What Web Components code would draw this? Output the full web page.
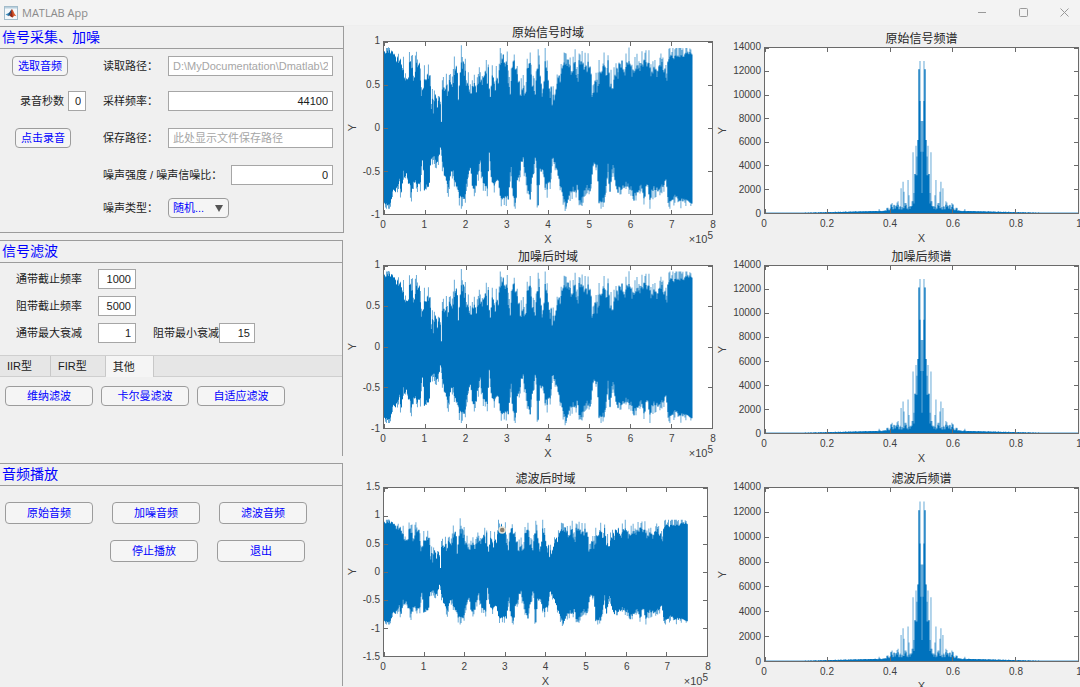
<!DOCTYPE html>
<html lang="zh-CN">
<head>
<meta charset="utf-8">
<title>MATLAB App</title>
<style>
  html, body { margin: 0; height: 100%; }
  body { overflow: hidden; background: #f0f0f0; color: #1c1c1c; font: 11px/14px "Liberation Sans", "Noto Sans CJK SC", sans-serif; }
  .side { display: flex; flex-direction: column; gap: 7px; }
  .capture { display: grid; grid-template-rows: 34px 36px 37px 37px 30px; padding-bottom: 9px; }
  .row { display: grid; grid-template-columns: 103px minmax(0, 1fr); align-items: center; padding-right: 10px; }
  .cell { padding-left: 12px; }
  .cell.indent { padding-left: 15px; }
  .cell.wide { padding-left: 20px; }
  .params { display: grid; grid-template-rows: repeat(3, 27px); align-items: center; padding: 2px 0 9px 16px; }
  .pair { display: flex; align-items: center; gap: 17px; }
  .filters { display: flex; gap: 8px; padding: 9px 5px 50px; --button-width: 88px; }
  .player { display: flex; flex-direction: column; gap: 16px; padding: 16px 5px; min-height: 168px; --button-width: 88px; --button-height: 22px; }
  .player > div { display: flex; gap: 19px; }
  .player > div + div { padding-left: 105px; }
</style>
</head>
<body>
<matlab-window caption="MATLAB App">
  <div class="side" slot="side">
    <ui-panel caption="信号采集、加噪" closed>
      <div class="capture">
        <div class="row">
          <div class="cell"><ui-button>选取音频</ui-button></div>
          <ui-field label="读取路径：" placeholder="D:\MyDocumentation\Dmatlab\2021"></ui-field>
        </div>
        <div class="row">
          <div class="cell wide"><ui-field label="录音秒数" value="0" style="--label-width:48px;--input-width:18px"></ui-field></div>
          <ui-field label="采样频率：" value="44100"></ui-field>
        </div>
        <div class="row">
          <div class="cell indent"><ui-button>点击录音</ui-button></div>
          <ui-field label="保存路径：" placeholder="此处显示文件保存路径"></ui-field>
        </div>
        <div class="row">
          <div class="cell"></div>
          <ui-field label="噪声强度 / 噪声信噪比：" value="0" style="--label-width:128px"></ui-field>
        </div>
        <div class="row">
          <div class="cell"></div>
          <ui-select label="噪声类型：" value="随机..."></ui-select>
        </div>
      </div>
    </ui-panel>
    <ui-panel caption="信号滤波">
      <div class="params" style="--label-width:82px;--input-width:38px">
        <ui-field label="通带截止频率" value="1000"></ui-field>
        <ui-field label="阻带截止频率" value="5000"></ui-field>
        <div class="pair">
          <ui-field label="通带最大衰减" value="1"></ui-field>
          <ui-field label="阻带最小衰减" value="15" style="--label-width:66px;--input-width:36px"></ui-field>
        </div>
      </div>
      <ui-tabs labels="IIR型,FIR型,其他" selected="2">
        <div class="filters">
          <ui-button>维纳滤波</ui-button>
          <ui-button>卡尔曼滤波</ui-button>
          <ui-button>自适应滤波</ui-button>
        </div>
      </ui-tabs>
    </ui-panel>
    <ui-panel caption="音频播放">
      <div class="player">
        <div>
          <ui-button>原始音频</ui-button>
          <ui-button>加噪音频</ui-button>
          <ui-button>滤波音频</ui-button>
        </div>
        <div>
          <ui-button>停止播放</ui-button>
          <ui-button>退出</ui-button>
        </div>
      </div>
    </ui-panel>
  </div>
  <axis-chart kind="wave" caption="原始信号时域" y="1,0.5,0,-0.5,-1" x="0,1,2,3,4,5,6,7,8" exponent="5" style="--plot-height:174px"></axis-chart>
  <axis-chart kind="spectrum" caption="原始信号频谱" y="14000,12000,10000,8000,6000,4000,2000,0" x="0,0.2,0.4,0.6,0.8,1" style="--plot-height:167px;--top:6px;--gutter:50px"></axis-chart>
  <axis-chart kind="wave" caption="加噪后时域" y="1,0.5,0,-0.5,-1" x="0,1,2,3,4,5,6,7,8" exponent="5" style="--plot-height:164px"></axis-chart>
  <axis-chart kind="spectrum" caption="加噪后频谱" y="14000,12000,10000,8000,6000,4000,2000,0" x="0,0.2,0.4,0.6,0.8,1" style="--plot-height:169px;--gutter:50px"></axis-chart>
  <axis-chart kind="wave" caption="滤波后时域" y="1.5,1,0.5,0,-0.5,-1,-1.5" x="0,1,2,3,4,5,6,7,8" exponent="5" marker="36.6,25" style="--plot-height:170px;--end:6px"></axis-chart>
  <axis-chart kind="spectrum" caption="滤波后频谱" y="14000,12000,10000,8000,6000,4000,2000,0" x="0,0.2,0.4,0.6,0.8,1" style="--plot-height:175px;--gutter:50px"></axis-chart>
</matlab-window>

<script>
function mount(el, html) {
  const root = el.attachShadow({ mode: 'open' });
  root.innerHTML = html;
  return root;
}

customElements.define('matlab-window', class extends HTMLElement {
  connectedCallback() {
    mount(this, `
    <style>
      :host { display: flex; flex-direction: column; min-height: 100%; }
      header { display: flex; align-items: center; height: 25px; background: #f3f3f3; color: #8a8a8a; border-bottom: 1px solid #eeeeee; }
      h1 { flex: 1; margin: 0; padding-left: 4px; font: 400 11px/14px "Open Sans", "Noto Sans", sans-serif; }
      .logo { padding-left: 4px; width: 14px; height: 14px; }
      nav { display: flex; gap: 13px; padding-right: 2px; }
      nav button { all: unset; display: grid; place-items: center; width: 28px; height: 24px; }
      main { display: grid; grid-template-columns: 344px minmax(0, 1fr); }
      .charts { display: grid; grid-template-columns: minmax(0, 370fr) minmax(0, 366fr); grid-template-rows: 224px 222px 222px; }
    </style>
    <header>
      <svg class="logo" viewBox="0 0 14 14"><rect x=".5" y=".5" width="13" height="13" fill="#f4f8fb" stroke="#a3bccb"/><path d="M1 1h12v1.500H1z" fill="#b9d0de"/><path d="M1.500 8.600 4.600 7 6 8.200 4.300 10z" fill="#3c8dbd"/><path d="M4.600 7C6 6.600 6.500 3.500 8 3.200L6.800 8.500 4.500 10.200z" fill="#20537f"/><path d="M8 3.200C9.200 3.600 10 8 12.500 10.200 11 9.300 10 9.500 8.800 11.300 8 12 7 10.500 5.500 9.600 7 8.500 7.200 4.500 8 3.200z" fill="#d8572a"/><path d="M8 3.200C8.300 5.500 8.400 9 8.800 11.300 7.800 11.400 7 10.500 5.500 9.600 7 8.500 7.200 4.500 8 3.200z" fill="#8e2a1e"/></svg>
      <h1></h1>
      <nav>
        <button aria-label="最小化"><svg width="9" height="9"><path d="M0 4.500h8" stroke="#999"/></svg></button>
        <button aria-label="最大化"><svg width="9" height="9"><rect x=".5" y=".5" width="8" height="8" rx="1" fill="none" stroke="#999"/></svg></button>
        <button aria-label="关闭"><svg width="9" height="9"><path d="M.5.5l8 8M8.500.5l-8 8" stroke="#999"/></svg></button>
      </nav>
    </header>
    <main>
      <slot name="side"></slot>
      <div class="charts"><slot></slot></div>
    </main>`).querySelector('h1').textContent = this.getAttribute('caption');
  }
});

customElements.define('ui-panel', class extends HTMLElement {
  connectedCallback() {
    mount(this, `
    <style>
      :host { display: block; border-top: 1px solid #9c9c9c; border-right: 1px solid #9c9c9c; margin-right: 1px; }
      :host([closed]) { border-bottom: 1px solid #9c9c9c; margin-right: 0; }
      h2 { margin: 0; padding-left: 2px; height: 21px; border-bottom: 1px solid #9c9c9c; color: #00f; font-size: 14px; line-height: 21px; font-weight: 400; }
    </style>
    <h2></h2><slot></slot>`).querySelector('h2').textContent = this.getAttribute('caption');
  }
});

customElements.define('ui-button', class extends HTMLElement {
  connectedCallback() {
    mount(this, `
    <style>
      :host { display: inline-block; vertical-align: middle; }
      button { display: block; box-sizing: border-box; width: var(--button-width, 56px); height: var(--button-height, 20px); padding: 0; border: 1px solid #9c9c9c; border-radius: 4px; background: #f5f5f5; color: #00f; font: inherit; white-space: nowrap; }
    </style>
    <button type="button"><slot></slot></button>`);
  }
});

customElements.define('ui-field', class extends HTMLElement {
  connectedCallback() {
    const root = mount(this, `
    <style>
      :host { display: flex; align-items: center; }
      label { flex: none; width: var(--label-width, 65px); white-space: nowrap; }
      input { box-sizing: border-box; width: var(--input-width, 100%); min-width: 0; height: 20px; margin: 0; padding: 0 4px; border: 1px solid #a6a6a6; border-radius: 0; background: #fff; color: #1c1c1c; font: inherit; text-align: right; }
      input:placeholder-shown { text-align: left; }
      input::placeholder { color: #a6a6a6; opacity: 1; }
    </style>
    <label for="f"></label><input id="f" type="text">`);
    const input = root.querySelector('input');
    root.querySelector('label').textContent = this.getAttribute('label');
    input.value = this.getAttribute('value') || '';
    if (this.hasAttribute('placeholder')) input.placeholder = this.getAttribute('placeholder');
  }
});

customElements.define('ui-select', class extends HTMLElement {
  connectedCallback() {
    const root = mount(this, `
    <style>
      :host { display: flex; align-items: center; }
      label { flex: none; width: 65px; }
      .box { display: grid; grid-template-columns: 61px; align-items: center; }
      .box > * { grid-area: 1 / 1; }
      select { appearance: none; box-sizing: border-box; height: 20px; margin: 0; padding: 0 4px; border: 1px solid #9c9c9c; border-radius: 4px; background: #f5f5f5; color: #00f; font: inherit; }
      svg { justify-self: end; margin-right: 6px; pointer-events: none; }
    </style>
    <label for="s"></label>
    <div class="box"><select id="s"><option></option></select><svg width="8" height="7"><path d="M0 0h8L4 7z" fill="#555"/></svg></div>`);
    root.querySelector('label').textContent = this.getAttribute('label');
    root.querySelector('option').textContent = this.getAttribute('value');
  }
});

customElements.define('ui-tabs', class extends HTMLElement {
  connectedCallback() {
    const current = +this.getAttribute('selected');
    mount(this, `
    <style>
      :host { display: block; }
      [role=tablist] { display: flex; height: 20px; background: #e6e6e6; border-top: 1px solid #cfcfcf; border-bottom: 1px solid #cfcfcf; }
      button { height: 20px; margin: 0; padding: 0 18px 0 7px; border: 0; border-right: 1px solid #c8c8c8; background: none; color: #1c1c1c; font: inherit; }
      button[aria-selected=true] { height: 21px; background: #f5f5f5; }
    </style>
    <div role="tablist">${this.getAttribute('labels').split(',').map((t, i) =>
      `<button type="button" role="tab" aria-selected="${i === current}">${t}</button>`).join('')}</div>
    <slot></slot>`);
  }
});

/* Envelope of the audio signal: x, y pairs; amplitude 1 is y=50 and amplitude -1 is y=572. */
const UPPER = [115,85,120,78,135,78,150,90,160,95,168,105,175,158,183,148,190,115,198,108,203,175,208,98,212,120,220,115,225,190,230,200,235,150,245,148,250,150,255,205,265,225,270,200,275,235,280,215,286,272,290,170,296,190,300,174,306,184,312,160,318,178,325,150,330,110,334,150,338,225,342,130,348,100,355,115,362,165,370,190,375,210,380,170,390,165,400,158,410,155,420,140,428,130,432,230,438,130,445,160,460,140,464,95,470,88,478,108,485,102,492,210,498,115,505,100,512,140,520,170,525,205,532,190,540,215,545,115,553,104,558,160,567,215,575,100,583,135,590,205,597,92,603,130,610,175,618,195,625,205,632,175,640,150,650,110,660,95,668,110,675,130,680,120,688,105,695,170,700,110,710,110,720,125,730,110,735,120,740,215,748,150,757,185,765,135,772,108,780,112,783,170,788,95,793,170,800,185,807,150,815,115,822,112,830,112,838,140,845,108,855,100,865,140,873,120,885,108,895,100,905,108,910,95,918,130,925,115,935,130,945,108,953,112,960,112,962,175,968,95,985,98,1000,92,1020,88,1041,82];
const LOWER = [115,545,135,545,138,505,150,500,160,480,165,510,172,455,180,458,187,480,195,505,205,480,215,490,222,490,228,390,235,500,248,495,255,415,262,402,270,425,280,405,285,362,290,430,300,480,307,490,315,440,322,455,335,505,345,535,355,530,362,480,370,448,375,435,380,495,390,495,398,435,403,425,410,480,425,500,430,385,438,480,445,495,455,462,465,535,475,525,488,535,495,420,500,515,510,540,515,470,525,430,532,405,540,465,547,505,553,525,558,470,565,430,570,395,577,545,582,450,590,430,597,490,605,495,613,475,620,405,630,430,637,470,645,495,655,535,660,550,670,525,680,498,690,515,695,480,700,535,710,535,715,508,725,495,735,505,742,425,755,435,760,535,775,540,783,480,788,405,791,525,800,435,806,445,812,510,825,500,840,485,855,495,865,530,875,505,885,495,895,530,905,480,912,535,925,495,940,510,955,490,962,460,968,535,980,535,990,515,1000,530,1020,530,1041,540];
const PEAKS = {347:60,463:68,505:88,553:82,577:72,598:68,661:85,703:88,775:82,787:90,850:67,910:75,946:85,1033:70,127:66,325:94,208:91,889:78,979:80,289:166,310:150,427:118,760:105,526:160,532:150};
const DIPS = {347:556,574:552,658:563,505:549,475:545,118:552,133:550,193:523,773:551,1036:548,895:543,970:550,424:518,445:507};

function at(list, x) {
  let i = 2;
  while (i < list.length - 2 && list[i] < x) i += 2;
  const t = Math.min(1, Math.max(0, (x - list[i - 2]) / (list[i] - list[i - 2])));
  return list[i - 1] + t * (list[i + 1] - list[i - 1]);
}

function wavePaths() {
  let seed = 7, solid = '', faint = '';
  const rnd = () => (seed = (seed * 16807) % 2147483647) / 2147483647;
  const near = (map, x) => { for (const k in map) if (Math.abs(k - x) < 1.6) return map[k]; };
  for (let x = 115; x < 1040; x += 3) {
    const calm = x < 150 || x > 965;
    const gap = !calm && rnd() > .82 ? 30 * rnd() : 0;
    const top = at(UPPER, x) + rnd() * (calm ? 14 : 28) - 5 + gap;
    const low = at(LOWER, x) - rnd() * (calm ? 12 : 20) + 4;
    const hi = near(PEAKS, x) || Math.max(68, top - (rnd() > .45 ? rnd() * 44 : 3));
    const lo = near(DIPS, x) || Math.min(556, low + (rnd() > .5 ? rnd() * 30 : 2));
    solid += `M${x} ${top.toFixed(1)}V${low.toFixed(1)}h3V${top.toFixed(1)}z`;
    faint += `M${x} ${hi.toFixed(1)}V${lo.toFixed(1)}h3V${hi.toFixed(1)}z`;
  }
  return [solid, faint];
}

/* Magnitudes of the spectrum's bins, from the centre outwards: solid part, peak. */
const BINS = [[1700,7800],[5200,7800],[9500,12900],[12200,12200],[6200,6200],[3200,4800],[3200,5700],[3300,3300],[800,1700],[1000,5150],[600,1000],[500,600],[350,600],[500,1500],[300,2800],[350,450],[700,850],[600,850],[400,1800],[400,2650],[300,500],[300,2100],[500,600],[300,350],[700,1000],[500,900],[600,650],[350,450],[650,700],[300,350],[500,850],[700,750],[300,400],[220,260],[300,450],[400,450],[180,220],[200,250],[180,200],[180,200],[150,180],[150,170],[180,200],[200,350],[150,180]];

function spectrumPaths() {
  let solid = '', faint = '';
  const bar = (x, v) => `M${x} ${14000 - v}V14000h1V${14000 - v}z`;
  for (let i = 0; i < 157; i++) {
    const [s, f] = BINS[i] || [Math.max(30, 150 - (i - 45) * 2 + (i * 37 % 5) * 8), 0];
    for (const x of i ? [157 + i, 157 - i] : [157]) { solid += bar(x, s); faint += bar(x, Math.max(s, f)); }
  }
  return [solid, faint];
}

const DATA = { wave: wavePaths(), spectrum: spectrumPaths() };

customElements.define('axis-chart', class extends HTMLElement {
  connectedCallback() {
    const get = n => this.getAttribute(n) || '';
    const xs = get('x').split(','), ys = get('y').split(',');
    const kind = get('kind');
    const [solid, faint] = DATA[kind];
    const range = +ys[0];
    const box = kind === 'wave' ? `115 ${311 - 261 * range} 986 ${522 * range}` : '0 0 314 14000';
    const pct = (i, list) => i * 100 / (list.length - 1) + '%';
    const vertical = xs.map((_, i) => `<line x1="${pct(i, xs)}" x2="${pct(i, xs)}" y2="4"/>`).join('');
    const bottom = xs.map((_, i) => `<line x1="${pct(i, xs)}" x2="${pct(i, xs)}" y2="-4"/>`).join('');
    const left = ys.map((_, i) => `<line y1="${pct(i, ys)}" y2="${pct(i, ys)}" x2="4"/>`).join('');
    const right = ys.map((_, i) => `<line y1="${pct(i, ys)}" y2="${pct(i, ys)}" x2="-4"/>`).join('');
    const [mx, my] = get('marker').split(',');
    const dot = my ? `<circle cx="${mx}%" cy="${my}%" r="3" fill="#8a7f70" stroke="#e6e2d4" stroke-width="1.500"/>` : '';
    mount(this, `
    <style>
      :host { display: grid; grid-template-columns: 16px calc(var(--gutter, 39px) - 16px) minmax(0, 1fr); grid-template-rows: 15px var(--plot-height) 17px 14px; padding-top: var(--top, 0px); padding-right: var(--end, 1px); align-content: start; color: #404040; font-size: 10px; }
      h3 { grid-area: 1 / 3; margin: 0; text-align: center; font-size: 12px; line-height: 15px; font-weight: 400; color: #262626; }
      .ylabel { grid-area: 2 / 1; align-self: center; justify-self: center; writing-mode: vertical-rl; transform: rotate(180deg); font-size: 11px; line-height: 14px; }
      .yticks { grid-area: 2 / 2; display: flex; flex-direction: column; justify-content: space-between; padding-right: 3px; }
      .yticks span { display: flex; align-items: center; justify-content: flex-end; height: 0; }
      .plot { grid-area: 2 / 3; box-sizing: border-box; display: block; width: 100%; height: 100%; overflow: visible; border: 1px solid #6a6a6a; background: #fff; }
      .ticks { stroke: #6a6a6a; shape-rendering: crispEdges; }
      .data { fill: #0072bd; }
      .xticks { grid-area: 3 / 3; display: flex; justify-content: space-between; padding-top: 3px; }
      .xticks span { display: flex; justify-content: center; width: 0; }
      .foot { grid-area: 4 / 3; display: grid; grid-template-columns: 1fr auto 1fr; font-size: 11px; }
      .exp { text-align: right; }
      sup { font-size: 10px; line-height: 0; vertical-align: 4px; }
    </style>
    <h3>${get('caption')}</h3>
    <div class="ylabel">Y</div>
    <div class="yticks">${ys.map(t => `<span>${t}</span>`).join('')}</div>
    <svg class="plot">
      <svg class="data" width="100%" height="100%" viewBox="${box}" preserveAspectRatio="none"><path d="${faint}" opacity=".6"/><path d="${solid}"/></svg>
      <g class="ticks">${vertical}${left}<svg y="100%" overflow="visible">${bottom}</svg><svg x="100%" overflow="visible">${right}</svg></g>
      ${dot}
    </svg>
    <div class="xticks">${xs.map(t => `<span>${t}</span>`).join('')}</div>
    <div class="foot"><span></span><span>X</span><span class="exp">${get('exponent') ? `×10<sup>${get('exponent')}</sup>` : ''}</span></div>`);
  }
});
</script>
</body>
</html>
